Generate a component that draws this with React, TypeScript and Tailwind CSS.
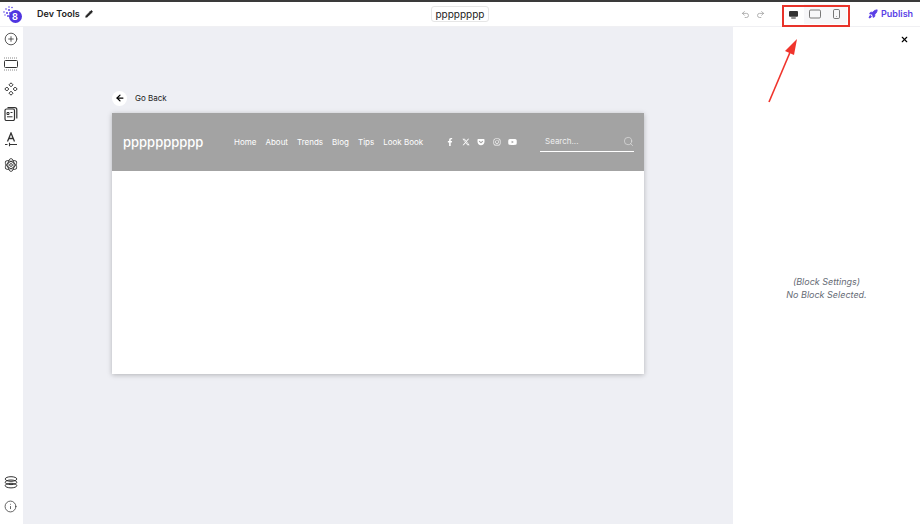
import { ArrowLeft, CirclePlus, Info, Pencil, Redo2, Rocket, Search, Undo2, X } from 'lucide-react';
import { FaFacebookF, FaGetPocket, FaInstagram, FaYoutube } from 'react-icons/fa';
import { FaXTwitter } from 'react-icons/fa6';

const navLinks = ['Home', 'About', 'Trends', 'Blog', 'Tips', 'Look Book'];

const Logo = () => (
  <div className="relative w-[20px] h-[18px]">
    <div className="absolute right-0 bottom-0 w-[13px] h-[13px] rounded-full bg-[#4f35e0] flex items-center justify-center text-white text-[9px] leading-none font-bold">
      8
    </div>
    <svg className="absolute left-0 top-0" width="12" height="16" viewBox="0 0 12 16" fill="#5b45e6">
      <circle cx="7" cy="2" r="0.8" />
      <circle cx="10" cy="2.5" r="0.8" />
      <circle cx="4" cy="4" r="0.8" />
      <circle cx="7" cy="5" r="1" />
      <circle cx="2" cy="7" r="0.8" />
      <circle cx="5" cy="8" r="1" />
      <circle cx="8" cy="8" r="1" />
      <circle cx="3" cy="10" r="0.7" />
      <circle cx="6" cy="11" r="1" />
      <circle cx="8.5" cy="13" r="0.7" />
    </svg>
  </div>
);

const SectionsIcon = () => (
  <svg width="14" height="14" viewBox="0 0 14 14" fill="none" stroke="#333">
    <rect x="0.5" y="3.5" width="13" height="7" rx="1" />
    <path d="M0 1h14M0 13h14" strokeDasharray="1 1" stroke="#888" />
  </svg>
);

const ComponentsIcon = () => (
  <svg width="14" height="14" viewBox="0 0 14 14" fill="none" stroke="#333">
    <path d="M7 .8 9 2.8 7 4.8 5 2.8ZM2.8 5 4.8 7 2.8 9 .8 7ZM11.2 5 13.2 7 11.2 9 9.2 7ZM7 9.2 9 11.2 7 13.2 5 11.2Z" />
  </svg>
);

const PagesIcon = () => (
  <svg width="14" height="14" viewBox="0 0 14 14" fill="none" stroke="#333">
    <rect x="1" y="2" width="9.5" height="11.5" rx="1.5" strokeWidth="1.2" />
    <path d="M3.5 .7h7.3a2 2 0 0 1 2 2v8.8" strokeWidth="1.2" />
    <path d="M3 5.5h2v2H3ZM3 9.8h5.5M6.5 5.5h2" strokeWidth="1" />
  </svg>
);

const FontIcon = () => (
  <svg width="14" height="15" viewBox="0 0 14 15" fill="none" stroke="#333">
    <path d="M3.5 9.5 7 1l3.5 8.5M4.8 6.5h4.4" strokeWidth="1.3" />
    <path d="M1 12.5h2.5M5 12.5h8M5.5 10.8v3.4" strokeWidth="1.1" />
  </svg>
);

const SettingsIcon = () => (
  <svg width="14" height="14" viewBox="0 0 14 14" fill="none" stroke="#333" strokeWidth="0.9">
    <ellipse cx="7" cy="7" rx="3.2" ry="6.4" />
    <ellipse cx="7" cy="7" rx="3.2" ry="6.4" transform="rotate(60 7 7)" />
    <ellipse cx="7" cy="7" rx="3.2" ry="6.4" transform="rotate(120 7 7)" />
    <circle cx="7" cy="7" r="1.4" />
  </svg>
);

const LayersIcon = () => (
  <svg width="14" height="13" viewBox="0 0 14 13" fill="none" stroke="#333" strokeWidth="1">
    <ellipse cx="7" cy="3" rx="5.8" ry="2.3" />
    <ellipse cx="7" cy="6.3" rx="5.8" ry="2.3" />
    <ellipse cx="7" cy="9.6" rx="5.8" ry="2.3" />
  </svg>
);

const DesktopIcon = () => (
  <svg width="9" height="9" viewBox="0 0 10 10" fill="#333">
    <rect x="0" y="1" width="10" height="6.5" rx="1" />
    <rect x="2.5" y="8.3" width="5" height="1.2" />
  </svg>
);

const TabletIcon = () => (
  <svg width="12" height="10" viewBox="0 0 12 10" fill="none" stroke="#555" strokeWidth="0.8">
    <rect x="0.5" y="1" width="11" height="8" rx="1.2" />
  </svg>
);

const MobileIcon = () => (
  <svg width="7" height="10" viewBox="0 0 7 10" fill="none" stroke="#555" strokeWidth="0.8">
    <rect x="0.5" y="0.5" width="6" height="9" rx="1.2" />
    <path d="M3.2 7.5h.6" />
  </svg>
);

export default function App() {
  return (
    <div className="relative w-[920px] h-[524px] overflow-hidden bg-white flex flex-col font-['Inter',sans-serif] border-t-2 border-[#3a3a3a]">
      <header className="h-[25px] shrink-0 flex items-center bg-white border-b border-[#f0f0f3]">
        <div className="w-[23px] shrink-0 flex justify-center">
          <Logo />
        </div>
        <div className="w-[398px] shrink-0 pl-[14px] flex items-center gap-[5px]">
          <span className="text-[9px] font-semibold text-[#222]">Dev Tools</span>
          <Pencil className="w-[8px] h-[8px] text-[#222] fill-[#222]" />
        </div>
        <div className="w-[58px] h-[16px] shrink-0 ml-[10px] rounded-[3px] border border-[#e6e6e6] flex items-center justify-center text-[10px] text-[#222]">
          pppppppp
        </div>
        <div className="ml-[252px] flex items-center gap-[6px] text-[#9a9a9a]">
          <Undo2 className="w-[9px] h-[9px]" />
          <Redo2 className="w-[9px] h-[9px]" />
        </div>
        <div className="ml-[17px] flex items-center h-[20px]">
          <div className="w-[22px] flex justify-center">
            <DesktopIcon />
          </div>
          <div className="w-[43px] h-full flex items-center rounded-r-[3px] bg-[#f7f7f9]">
            <div className="w-[21px] flex justify-center">
              <TabletIcon />
            </div>
            <div className="w-[22px] flex justify-center">
              <MobileIcon />
            </div>
          </div>
        </div>
        <div className="ml-[21px] flex items-center gap-[3px] text-[#5a3fe6]">
          <Rocket className="w-[10px] h-[10px] fill-[#5a3fe6]" />
          <span className="text-[9px] font-semibold">Publish</span>
        </div>
      </header>

      <div className="flex-1 flex min-h-0">
        <aside className="w-[23px] shrink-0 bg-white flex flex-col items-center justify-between pt-[5px] pb-[11px] pr-[2px]">
          <div className="flex flex-col items-center gap-[11px]">
            <CirclePlus className="w-[14px] h-[14px] text-[#333]" strokeWidth={1.4} />
            <SectionsIcon />
            <ComponentsIcon />
            <PagesIcon />
            <FontIcon />
            <SettingsIcon />
          </div>
          <div className="flex flex-col items-center gap-[11px]">
            <LayersIcon />
            <Info className="w-[13px] h-[13px] text-[#333]" strokeWidth={1.4} />
          </div>
        </aside>

        <main className="w-[710px] shrink-0 bg-[#eeeff4] pl-[89px] pt-[63px]">
          <div className="flex items-center gap-[8px] h-[16px] mb-[7px]">
            <div className="w-[15px] h-[15px] rounded-full bg-white flex items-center justify-center">
              <ArrowLeft className="w-[10px] h-[10px] text-black" strokeWidth={3} />
            </div>
            <span className="text-[8px] text-[#222]">Go Back</span>
          </div>
          <div className="w-[532px] h-[261px] bg-white shadow-[0_1px_5px_rgba(0,0,0,0.25)]">
            <div className="h-[58px] bg-[#a3a3a3] flex items-center text-white">
              <div className="w-[111px] pl-[11px] text-[13px] font-medium leading-none">pppppppppp</div>
              <nav className="w-[202px] pl-[11px] flex items-center gap-[9px] text-[8px] whitespace-nowrap">
                {navLinks.map((link) => (
                  <span key={link}>{link}</span>
                ))}
              </nav>
              <div className="flex items-center gap-[7.5px] ml-[21px] text-white">
                <FaFacebookF className="w-[8px] h-[8px]" />
                <FaXTwitter className="w-[8px] h-[8px]" />
                <FaGetPocket className="w-[8px] h-[8px]" />
                <FaInstagram className="w-[8px] h-[8px]" />
                <FaYoutube className="w-[9px] h-[8px]" />
              </div>
              <div className="ml-[23px] w-[94px] h-[20px] -mt-[1px] border-b border-white flex items-center justify-between pl-[5px]">
                <span className="text-[8px] text-[#eee]">Search...</span>
                <Search className="w-[11px] h-[11px] text-[#eee]" strokeWidth={1.2} />
              </div>
            </div>
          </div>
        </main>

        <section className="relative flex-1 bg-white flex items-center justify-center">
          <X className="absolute top-[8px] right-[11px] w-[9px] h-[9px] text-black" strokeWidth={3} />
          <div className="text-center text-[9px] italic leading-[13px] text-[#666b75] pt-[24px]">
            <p>(Block Settings)</p>
            <p>No Block Selected.</p>
          </div>
        </section>
      </div>

      <div className="absolute left-[782px] top-[3px] w-[68px] h-[22px] border-2 border-[#e8332a]" />
      <svg className="absolute left-[765px] top-[34px]" width="36" height="70" viewBox="0 0 36 70">
        <path d="M4 66 26 14" stroke="#f0342c" strokeWidth="1.6" />
        <path d="M32 3 20 15 29 19Z" fill="#f0342c" />
      </svg>
    </div>
  );
}
